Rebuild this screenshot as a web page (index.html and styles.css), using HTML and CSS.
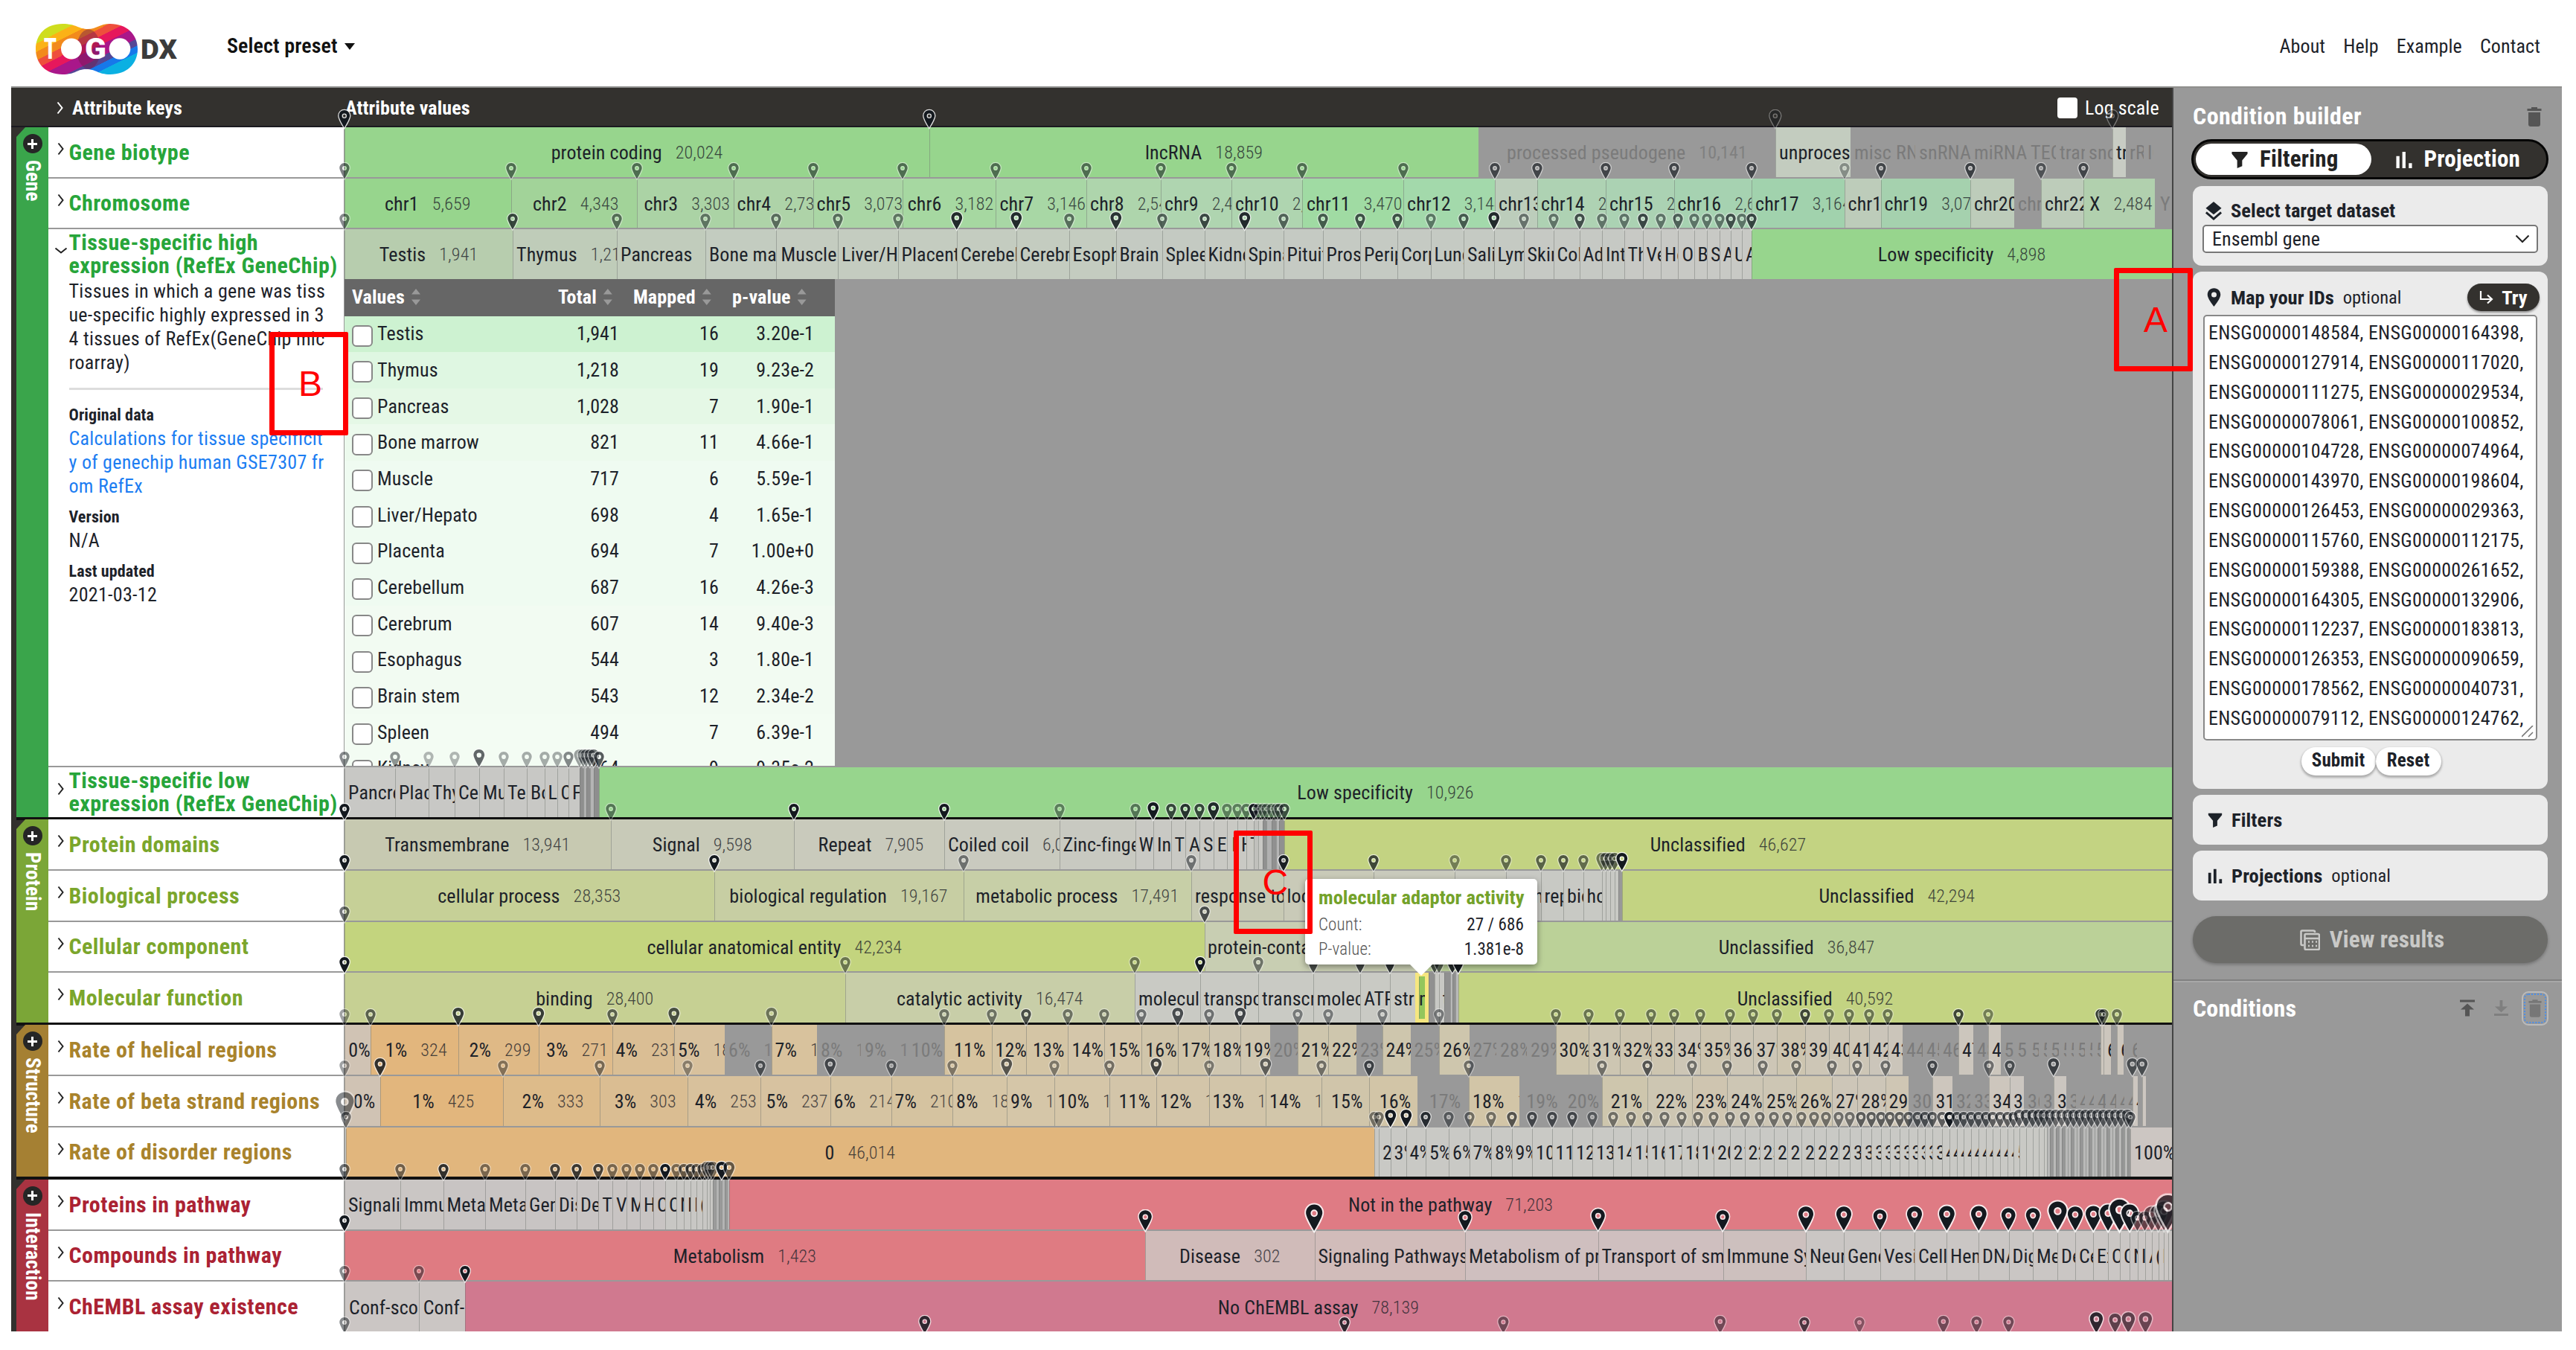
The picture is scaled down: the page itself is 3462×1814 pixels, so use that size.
FILE: index.html
```html
<!DOCTYPE html>
<html lang="en">
<head>
<meta charset="utf-8">
<title>TogoDX</title>
<link rel="stylesheet" href="styles.css">
</head>
<body>
<svg class="defs" width="0" height="0">
  <symbol id="pin" viewBox="0 0 16 23" overflow="visible"><path fill-rule="evenodd" d="M8 .9C4.300.9 1.300 3.700 1.300 7.700 1.300 11.500 8 22.200 8 22.200S14.700 11.500 14.700 7.700C14.700 3.700 11.700.9 8 .9ZM8 5A2.900 3 0 1 1 8 11 2.900 3 0 1 1 8 5Z"/></symbol>
  <symbol id="chev" viewBox="0 0 10 18"><path d="M1.500 1.500 7.500 9 1.500 16.500" fill="none" stroke="currentColor" stroke-width="2"/></symbol>
  <symbol id="funnel" viewBox="0 0 24 24"><path d="M1 1H23V4L15.500 13V21L8.500 24V13L1 4Z" fill="currentColor"/></symbol>
  <symbol id="bars" viewBox="0 0 24 24"><path d="M1 7H5.500V24H1ZM9.500 1H14V24H9.500ZM18.500 17H23V24H18.500Z" fill="currentColor"/></symbol>
  <symbol id="trash" viewBox="0 0 20 26"><path d="M6 0H14V2H19.500V5H.5V2H6ZM2 7H18V23Q18 26 15 26H5Q2 26 2 23Z" fill="currentColor"/></symbol>
</svg>

<header class="top">
  <svg class="logo" viewBox="0 0 190 68">
    <defs>
      <linearGradient id="bands" gradientUnits="userSpaceOnUse" x1="0" y1="0" x2="54" y2="107">
        <stop offset=".2" stop-color="#cfdd1e"/><stop offset=".2" stop-color="#fbb216"/>
        <stop offset=".285" stop-color="#fbb216"/><stop offset=".285" stop-color="#f28a1c"/>
        <stop offset=".37" stop-color="#f28a1c"/><stop offset=".37" stop-color="#ee4f3c"/>
        <stop offset=".45" stop-color="#ee4f3c"/><stop offset=".45" stop-color="#e6175c"/>
        <stop offset=".54" stop-color="#e6175c"/><stop offset=".54" stop-color="#a9178a"/>
        <stop offset=".66" stop-color="#a9178a"/><stop offset=".66" stop-color="#544796"/>
        <stop offset=".73" stop-color="#544796"/><stop offset=".73" stop-color="#1778ea"/>
        <stop offset=".8" stop-color="#1778ea"/><stop offset=".8" stop-color="#0bb0e2"/>
      </linearGradient>
    </defs>
    <path d="M36 0C54 0 58 7 70 7S86 0 100 0C122 0 137 14 137 34S122 68 100 68C84 68 81 61 68 61S54 68 36 68C14 68 0 54 0 34S14 0 36 0Z" fill="url(#bands)"/>
    <ellipse cx="71" cy="34" rx="16" ry="26.500" fill="#701a4a" opacity=".45"/>
    <circle cx="48" cy="33.500" r="14" fill="#fff"/>
    <circle cx="113" cy="33.500" r="14.300" fill="#fff"/>
    <text x="11" y="46.500" class="logo-t" textLength="17" lengthAdjust="spacingAndGlyphs">T</text>
    <text x="66" y="46.500" class="logo-t" textLength="29" lengthAdjust="spacingAndGlyphs">G</text>
    <text x="141" y="46.500" class="logo-dx" textLength="49" lengthAdjust="spacingAndGlyphs">DX</text>
  </svg>
  <div class="preset">Select preset<i></i></div>
  <nav><a>About</a><a>Help</a><a>Example</a><a>Contact</a></nav>
</header>

<main class="app">
  <section class="board">
    <div class="board-head">
      <svg class="hchev"><use href="#chev"/></svg><b class="hk">Attribute keys</b><b class="hv">Attribute values</b>
      <span class="log"><i></i>Log scale</span>
    </div>

    <div class="group gene">
      <div class="cat"><span class="plus"></span><span class="cat-name">Gene</span></div>
      <div class="rows">
        <div class="key"><svg><use href="#chev"/></svg><h3>Gene biotype</h3></div><div class="track" data-row="biotype"></div>
        <div class="key"><svg><use href="#chev"/></svg><h3>Chromosome</h3></div><div class="track" data-row="chromosome"></div>
        <div class="key open"><svg><use href="#chev"/></svg>
          <h3>Tissue-specific high<br>expression (RefEx GeneChip)</h3>
          <p>Tissues in which a gene was tiss<br>ue-specific highly expressed in 3<br>4 tissues of RefEx(GeneChip mic<br>roarray)</p>
          <hr>
          <h4>Original data</h4><p class="link">Calculations for tissue specificit<br>y of genechip human GSE7307 fr<br>om RefEx</p>
          <h4>Version</h4><p>N/A</p>
          <h4>Last updated</h4><p>2021-03-12</p>
        </div>
        <div class="detail">
          <div class="track" data-row="high"></div>
          <div class="table">
            <div class="tr th"><span>Values<i></i></span><span>Total<i></i></span><span>Mapped<i></i></span><span>p-value<i></i></span></div>
          </div>
        </div>
        <div class="key"><svg><use href="#chev"/></svg><h3>Tissue-specific low<br>expression (RefEx GeneChip)</h3></div><div class="track" data-row="low"></div>
      </div>
    </div>

    <div class="group protein">
      <div class="cat"><span class="plus"></span><span class="cat-name">Protein</span></div>
      <div class="rows">
        <div class="key"><svg><use href="#chev"/></svg><h3>Protein domains</h3></div><div class="track" data-row="domains"></div>
        <div class="key"><svg><use href="#chev"/></svg><h3>Biological process</h3></div><div class="track" data-row="process"></div>
        <div class="key"><svg><use href="#chev"/></svg><h3>Cellular component</h3></div><div class="track" data-row="component"></div>
        <div class="key"><svg><use href="#chev"/></svg><h3>Molecular function</h3></div><div class="track" data-row="function"></div>
      </div>
    </div>

    <div class="group structure">
      <div class="cat"><span class="plus"></span><span class="cat-name">Structure</span></div>
      <div class="rows">
        <div class="key"><svg><use href="#chev"/></svg><h3>Rate of helical regions</h3></div><div class="track" data-row="helical"></div>
        <div class="key"><svg><use href="#chev"/></svg><h3>Rate of beta strand regions</h3></div><div class="track" data-row="beta"></div>
        <div class="key"><svg><use href="#chev"/></svg><h3>Rate of disorder regions</h3></div><div class="track" data-row="disorder"></div>
      </div>
    </div>

    <div class="group interaction">
      <div class="cat"><span class="plus"></span><span class="cat-name">Interaction</span></div>
      <div class="rows">
        <div class="key"><svg><use href="#chev"/></svg><h3>Proteins in pathway</h3></div><div class="track" data-row="pathway"></div>
        <div class="key"><svg><use href="#chev"/></svg><h3>Compounds in pathway</h3></div><div class="track" data-row="compounds"></div>
        <div class="key"><svg><use href="#chev"/></svg><h3>ChEMBL assay existence</h3></div><div class="track" data-row="chembl"></div>
        <div class="key"></div><div class="track" data-row="next"></div>
      </div>
    </div>
  </section>

  <aside class="side">
    <div class="side-title">Condition builder<svg class="trash"><use href="#trash"/></svg></div>
    <div class="toggle">
      <span class="on"><svg><use href="#funnel"/></svg>Filtering</span>
      <span><svg><use href="#bars"/></svg>Projection</span>
    </div>
    <div class="card dataset">
      <div class="label"><svg viewBox="0 0 24 26"><path d="M12 0 23 9 12 18 1 9Z" fill="currentColor"/><path d="M1.500 15 12 24 22.500 15" fill="none" stroke="currentColor" stroke-width="3"/></svg>Select target dataset</div>
      <div class="select">Ensembl gene<svg viewBox="0 0 20 12"><path d="M1.500 1.500 10 10 18.500 1.500" fill="none" stroke="#222" stroke-width="2"/></svg></div>
    </div>
    <div class="card ids">
      <div class="label"><svg class="mark" viewBox="0 0 20 26"><path fill-rule="evenodd" d="M10 0C4.500 0 .8 4 .8 9.200.8 15 10 26 10 26S19.200 15 19.200 9.200C19.200 4 15.500 0 10 0ZM10 5.500A3.700 3.700 0 1 1 10 12.900 3.700 3.700 0 1 1 10 5.500Z" fill="currentColor"/></svg>Map your IDs<small>optional</small>
        <span class="try"><svg viewBox="0 0 20 18"><path d="M2 0V11H16M11 5.500 17 11 11 16.500" fill="none" stroke="#fff" stroke-width="2.200"/></svg>Try</span></div>
      <div class="area">ENSG00000148584, ENSG00000164398,<br>ENSG00000127914, ENSG00000117020,<br>ENSG00000111275, ENSG00000029534,<br>ENSG00000078061, ENSG00000100852,<br>ENSG00000104728, ENSG00000074964,<br>ENSG00000143970, ENSG00000198604,<br>ENSG00000126453, ENSG00000029363,<br>ENSG00000115760, ENSG00000112175,<br>ENSG00000159388, ENSG00000261652,<br>ENSG00000164305, ENSG00000132906,<br>ENSG00000112237, ENSG00000183813,<br>ENSG00000126353, ENSG00000090659,<br>ENSG00000178562, ENSG00000040731,<br>ENSG00000079112, ENSG00000124762,<svg viewBox="0 0 16 16"><path d="M0 15 15 0M9 15 15 9" stroke="#777" stroke-width="1.600"/></svg></div>
      <div class="btns"><span class="submit">Submit</span><span class="reset">Reset</span></div>
    </div>
    <div class="card single"><svg><use href="#funnel"/></svg>Filters</div>
    <div class="card single"><svg><use href="#bars"/></svg>Projections<small>optional</small></div>
    <div class="view"><svg viewBox="0 0 27 28"><path d="M5 21H3Q1.500 21 1.500 19V3Q1.500 1.500 3 1.500H18Q20 1.500 20 3V4M8 6H24Q26 6 26 8V25Q26 27 24 27H8Q6.500 27 6.500 25V8Q6.500 6 8 6ZM6.500 12H26M11 16.500H13M16 16.500H18M21 16.500H23M11 22H13M16 22H18M21 22H23" fill="none" stroke="currentColor" stroke-width="2.600"/></svg>View results</div>
    <div class="conds">Conditions
      <svg class="up" viewBox="0 0 20 22"><path d="M0 0H20V3H0ZM10 5 19 13H13V22H7V13H1Z" fill="currentColor"/></svg>
      <svg class="down" viewBox="0 0 20 22"><path d="M0 19H20V22H0ZM10 17 19 9H12V0H8V9H1Z" fill="currentColor"/></svg>
      <span class="focus"><svg><use href="#trash"/></svg></span>
    </div>
  </aside>
</main>

<div class="tip">
  <b>molecular adaptor activity</b>
  <div><span>Count:</span><em>27 / 686</em></div>
  <div><span>P-value:</span><em>1.381e-8</em></div>
</div>
<div class="mark-box a">A</div>
<div class="mark-box b">B</div>
<div class="mark-box c">C</div>
<script src="script.js"></script>
</body>
</html>
```
FILE: styles.css
```css
* { box-sizing: border-box; }
body { margin: 0; width: 3462px; height: 1814px; overflow: hidden; background: #fff; color: #1d2229; font: 400 26px/32px "Roboto Condensed", Roboto, sans-serif; font-stretch: 75%; letter-spacing: .12px; position: relative; }
h3, h4, p { margin: 0; }
.defs { position: absolute; }
svg { display: block; flex: none; }

.top { height: 116px; display: flex; align-items: flex-start; padding: 32px 48px 0; }
.logo { width: 190px; height: 68px; }
.logo-t { font: 900 39px Roboto, sans-serif; fill: #fff; }
.logo-dx { font: 900 36px Roboto, sans-serif; fill: #3b3b3b; }
.preset { margin: 14px 0 0 67px; font-size: 28px; font-weight: 600; display: flex; align-items: center; gap: 9px; color: #111; }
.preset i { border: 7px solid transparent; border-top: 9px solid #111; border-bottom: 0; }
nav { margin: 14px 0 0 auto; display: flex; gap: 24px; }

.app { display: flex; margin-left: 15px; width: 3428px; height: 1673px; border-top: 2px solid #8f8f8d; overflow: hidden; background: #999; }
.board { width: 2904px; background: #33312e; flex: none; }
.side { width: 524px; flex: none; position: relative; z-index: 5; background: #999; border-left: 2px solid #444; padding: 22px 19px 0 26px; }

.board-head { height: 53px; display: flex; align-items: center; color: #fff; padding: 3px 0 0 61px; border-bottom: 2px solid #1b1a20; }
.hchev { width: 10px; height: 18px; margin-right: 11px; }
.hk { width: 367px; }
.hv { flex: 1; }
.log { display: flex; align-items: center; width: 154px; }
.log i { width: 27px; height: 28px; border-radius: 4px; background: #fff; margin-right: 10px; }

.group { display: flex; padding-left: 7px; position: relative; }
.cat { width: 43px; display: flex; flex-direction: column; align-items: center; padding-top: 9px; background: var(--c); clip-path: polygon(12px 0, 100% 0, 100% 100%, 0 100%, 0 13px); color: #fff; }
.plus { width: 26px; height: 26px; border-radius: 50%; background: linear-gradient(#fff, #fff) center/13px 3px no-repeat, linear-gradient(#fff, #fff) center/3px 13px no-repeat #262626; }
.cat-name { writing-mode: vertical-rl; font-weight: 700; margin-top: 9px; font-size: 27px; line-height: 30px; }
.rows { display: grid; grid-template-columns: 397px 2457px; row-gap: 2px; background: #999; }
.gene { --c: #3aa54b; --t: #27a53a; margin-bottom: 3px; }
.protein { --c: #7ba637; --t: #7ba62c; margin-bottom: 3px; }
.structure { --c: #a58033; --t: #a9832c; margin-bottom: 3.5px; }
.interaction { --c: #a93341; --t: #ab2233; height: 204.25px; }
.group::after { content: ""; position: absolute; left: 7px; right: 0; top: 100%; height: 3.5px; background: #111; }
.gene .rows { grid-template-rows: 66.5px 66.5px 720.5px 67.5px; }
.protein .rows { grid-template-rows: repeat(4, 66.75px); }
.interaction .rows { grid-template-rows: repeat(4, 66.75px); }
.structure .rows { grid-template-rows: repeat(3, 66.75px); }

.key { background: #fff; padding-left: 27.5px; position: relative; display: flex; flex-direction: column; justify-content: center; }
.key > svg { position: absolute; left: 12px; top: 20px; width: 10px; height: 18px; color: #222; }
.key h3 { font-size: 30px; line-height: 31px; font-weight: 700; letter-spacing: .45px; color: var(--t); white-space: nowrap; }
.key.open { justify-content: flex-start; padding-top: 2px; }
.key.open > svg { transform: rotate(90deg); }
.key.open p { white-space: nowrap; letter-spacing: .3px; }
.key.open h3 { margin-bottom: 3px; }
.key hr { width: 341px; margin: 18px 0 18px; border: 0; height: 3px; background: #ddd; }
.key h4 { font-size: 22px; line-height: 32px; margin-bottom: -1px; }
.key p + h4 { margin-top: 10px; }
.key hr + h4 { margin-top: 0; }
.key .link { color: #1c7df2; }

.track { display: flex; position: relative; margin-left: 1px; }
.detail .track { height: 66.5px; }
.seg { height: 100%; flex: none; overflow: hidden; display: flex; justify-content: safe center; align-items: center; padding: 2px 0 0 5px; white-space: nowrap; box-shadow: inset 1px 0 rgba(110, 115, 110, .45); }
.seg span { margin-left: 18px; font-size: 24px; font-weight: 300; opacity: .8; }
.seg.wide, .seg.thin { padding-left: 0; }
.seg.none { color: #7b7b7b; box-shadow: none; }
.seg.none span { opacity: .8; font-weight: 400; }
.seg.sel { border: 5px solid #f6e67f; background: #93c65c; padding-left: 0; }
.pin { position: absolute; overflow: visible; fill: #14191f; stroke: rgba(255, 255, 255, .85); stroke-width: 2.4; paint-order: stroke; }

.table { width: 659px; margin-left: 1px; height: 654px; overflow: hidden; display: flex; flex-direction: column; }
.tr { height: 48.66px; flex: none; display: grid; grid-template-columns: 270px 99px 134px 128px; align-items: center; padding-bottom: 1px; }
.tr span { text-align: right; white-space: nowrap; }
.tr span:first-child { display: flex; align-items: center; padding-left: 10px; text-align: left; }
.box { width: 28px; height: 29px; border: 2px solid #888; border-radius: 6px; background: #fff; margin-right: 6px; position: relative; top: 3px; }
.th { height: 50px; background: #666; color: #fff; font-weight: 700; grid-template-columns: 287px 101px 133px 138px; }
.th span { display: flex; align-items: center; justify-content: flex-start; }
.th i { width: 12px; height: 22px; margin-left: 9px; background: #999; clip-path: polygon(50% 0, 100% 34%, 0 34%, 0 66%, 100% 66%, 50% 100%, 0 66%, 0 34%); }

.side-title { color: #fff; font-size: 32px; font-weight: 700; letter-spacing: .4px; line-height: 32px; display: flex; justify-content: space-between; margin-bottom: 15px; }
.trash { width: 20px; height: 26px; color: #555; margin: 4px 8px 0 0; }
.toggle { height: 54px; margin: 0 -1px 9px -2px; border: 3px solid #050505; border-radius: 27px; background: #33312e; display: flex; padding: 3px; font-size: 31px; font-weight: 700; letter-spacing: .2px; color: #fff; }
.toggle span { display: flex; align-items: center; justify-content: center; gap: 15px; flex: 1; }
.toggle svg { width: 24px; height: 23px; }
.toggle .on { background: #fff; color: #222; border-radius: 21px; padding-left: 3px; }
.card { background: #ebebeb; border-radius: 12px; }
.label { font-size: 26.5px; letter-spacing: 0; font-weight: 700; display: flex; align-items: center; }
.label svg { width: 24px; height: 25px; margin-right: 11px; }
.label svg.mark { width: 19px; margin: 0 13px 0 3px; }
small { font-size: 24.5px; font-weight: 400; margin-left: 12px; }
.dataset { height: 107px; padding: 17px 13px 0 16px; margin-bottom: 8px; }
.select { margin: 3px 0 0 -3px; height: 38px; border: 2px solid #777; border-radius: 5px; background: #fff; display: flex; align-items: center; justify-content: space-between; padding: 0 9px 0 11px; }
.select svg { width: 20px; height: 12px; }
.ids { height: 695px; padding: 16px 11px 0 16px; margin-bottom: 8px; }
.ids .label { height: 37px; margin-bottom: 5px; }
.try { margin-left: auto; width: 97px; height: 37px; border-radius: 19px; background: #33312e; color: #fff; display: flex; align-items: center; justify-content: center; box-shadow: 0 2px 3px #0006; }
.label .try svg { width: 20px; height: 18px; margin-right: 10px; }
.area { margin: 0 3px 0 -2px; height: 572px; border: 2px solid #888; border-radius: 5px; background: #fff; padding: 3px 5px; line-height: 39.85px; letter-spacing: .28px; position: relative; white-space: nowrap; }
.area svg { position: absolute; right: 3px; bottom: 2px; width: 16px; height: 16px; }
.btns { display: flex; justify-content: center; padding-top: 9px; margin-left: -3px; font-size: 25px; font-weight: 700; }
.btns span { height: 38px; border-radius: 19px; background: #fff; line-height: 36px; text-align: center; box-shadow: 0 2px 3px 1px #0004; }
.submit { width: 100px; }
.reset { width: 88px; }
.single { height: 67px; margin-bottom: 8px; display: flex; align-items: center; font-size: 26.5px; font-weight: 700; padding-left: 20px; }
.single svg { width: 20px; height: 22px; margin-right: 12px; }
.view { height: 63px; margin: 21px 0 22px; border-radius: 32px; background: #6c6c69; color: #c9c9c7; display: flex; align-items: center; justify-content: center; gap: 13px; padding-left: 5px; font-size: 31px; font-weight: 700; box-shadow: 0 2px 4px #0004; }
.view svg { width: 27px; height: 28px; }
.conds { margin: 0 -19px 0 -26px; padding: 14px 18px 0 26px; border-top: 2px solid #808080; box-shadow: inset 0 2px #a8a8a8; height: 80px; display: flex; align-items: flex-start; font-size: 32px; line-height: 46px; font-weight: 700; color: #fff; }
.conds .up { width: 20px; height: 23px; margin: 11px 26px 0 auto; color: #555; }
.conds .down { width: 19px; height: 23px; margin: 11px 18px 0 0; color: #7f7f7f; }
.focus { width: 36px; height: 46px; border: 2px solid #bbb; border-radius: 9px; display: grid; place-items: center; color: #777; outline: 2px dotted #4a8ee8; outline-offset: -5px; }
.focus svg { width: 18px; height: 24px; }

.tip { position: absolute; left: 1754px; top: 1181px; width: 312px; height: 115px; background: #fff; border-radius: 5px; padding: 9px 18px; box-shadow: 0 3px 8px #0006; z-index: 6; }
.tip::after { content: ""; position: absolute; left: 141px; top: 100%; border: 15px solid transparent; border-top-color: #fff; border-bottom: 0; }
.tip b { display: block; font-size: 26.5px; letter-spacing: 0; color: #74a22a; white-space: nowrap; }
.tip div { display: flex; justify-content: space-between; font-size: 23px; height: 33px; line-height: 41px; }
.tip span { color: #555; font-weight: 300; }
.tip em { font-style: normal; }
.mark-box { position: absolute; z-index: 7; border: 7px solid #f00; border-radius: 2px; color: #f00; font: 48px/1 "Liberation Sans", sans-serif; display: flex; justify-content: center; align-items: center; }
.a { left: 2841px; top: 360px; width: 106px; height: 139px; padding-left: 6px; }
.b { left: 362px; top: 446px; width: 106px; height: 139px; padding-left: 4px; }
.c { left: 1658px; top: 1116px; width: 106px; height: 139px; padding-left: 6px; }
```
FILE: script.js
```js
// Each line: start | label | count | colour | pin opacity | pin scale.
// "x" marks a value with no mapped entries; blank fields repeat the previous one.
const END = 2919, START = 463;
const DATA = {
biotype: `463|protein coding|20,024|#97d58d|1|1.1
1249|lncRNA|18,859||1|1.1
1987|processed pseudogene|10,141|x
2386|unprocessed|2,6|#c3ccbf|.4|1.1
2487|misc RNA||x
2574|snRNA||x
2648|miRNA||x
2724|TEC||x
2763|transcribed||x
2802|snoRNA||x
2839|transl||#c8ccc4|.4|1.1
2857|rRNA||x
2881|IG||x
2894|||x`,
chromosome: `463|chr1|5,659|#97d58d|.55|1
686.5|chr2|4,343|#a2d399
856|chr3|3,303|#abd3a5
985.5|chr4|2,732|#aed3a8
1092.5|chr5|3,073|#aad6a5
1212.5|chr6|3,182|#a6d8a1
1337.5|chr7|3,146|#a8d7a5
1460|chr8|2,548|#aed5ac
1560|chr9|2,416|#afd5b0
1655|chr10|2,332|#afd5b0
1749.5|chr11|3,470|#a0dba3
1886|chr12|3,144|#a3d9ab
2009|chr13|1,5|#bccdbb|.65
2066|chr14|2,4|#aed2b3
2158|chr15|2,4|#abd2b3
2249.5|chr16|2,670|#a6d2b1
2354|chr17|3,164|#a1d2ad
2478.5|chr18||#bdccba|.35
2527.5|chr19|3,076|#a5d1ae|.65
2648|chr20||#bdccba|.7
2707|chr21||x
2743|chr22||#bdccba|.55
2799.5|X|2,484|#b1d0ae|.65
2896|Y||x`,
high: `463|Testis|1,941|#b7cdae|.5|1
689|Thymus|1,218|#bfccb9|.75
829|Pancreas|1,028|#c1ccbc|.55
948|Bone marrow||#c3ccc0|.5
1043|Muscle||#c4ccc0|.55
1126|Liver/Hepato|||.55
1206.5|Placenta|||.5
1286|Cerebellum|||.9|1.1
1365.5|Cerebrum|||.9|1.1
1436.5|Esophagus|||.55|1
1499.5|Brain stem||#c4cac2|.85|1.1
1561.5|Spleen|||.6|1
1618.5|Kidney|||.75
1672.5|Spinal|||.9|1.1
1724.5|Pituitary||#c5cac3|.6|1
1777.5|Prostate|||.65
1828|Peripheral|||.7
1878|Corpus|||.7
1922.5|Lung|||.5
1967|Salivary|||.65
2007.5|Lymph|||.9|1.1
2047.5|Skin||#c6c9c4|.5|1
2087.5|Colon|||.5
2122.5|Adrenal|||.7
2153|Int|||.5
2182.5|Thy||#c8c9c5|.5
2207.5|Vein|||.75
2232|Heart|||.5
2255|O|||.6
2276.5|B|||.5
2294|S|||.5
2310.5|A|||.5
2326|U|||.7
2341|A|||.5
2354|Low specificity|4,898|#97d58d|.75`,
low: `463|Pancreas||#c8c8c5|.5|1
531|Placenta|||.45
576|Thymus|||.3
611|Cereb|||.3
644|Muscle|||.65|1.1
677|Testis|||.35|1
708|Bone|||.35
731.5|Lu|||.35
748.5|C|||.35
764|F|||.5
779|||#8e8e8e|.4|1.1
784|||#b0b0b0|.5
788|||#8e8e8e|.5
793|||#b4b4b4|.6
798|||#8e8e8e|.6
805|Low specificity|10,926|#97d58d|.7|1`,
domains: `463|Transmembrane|13,941|#c7c9b1|1|1
820.5|Signal|9,598|#c8cab8|.5
1067|Repeat|7,905|#c9cabc|1
1269|Coiled coil|6,052|#c9cabf|1
1423.5|Zinc-finger||#c8c9c1|.45
1525.5|WD||#c9c9c4|.5
1550|In|||1|1.1
1573.5|Ti|||.75|1
1593|A|||.85
1612|S|||.75
1630.5|E|||.9|1.1
1649|I|||.45|1
1663|H|||.45
1675|T|||.5
1684.5|||#c0c0bc|1
1690.5|||#c8c8c4|.5
1697|||#909090|.5
1702|||#b0b0b0|.5
1709|||#909090|.5
1715|||#b4b4b4|.5
1719|||#909090|.6
1726|Unclassified|46,627|#c3d382|.7`,
process: `463|cellular process|28,353|#c6d097|1|1
959.5|biological regulation|19,167|#c7cea3|1
1294.5|metabolic process|17,491|#c7cfa7|.5
1601|response to stimulus||#c8cab4|.5
1724.5|localization||#c9cab8|.95
1846|developmental||#c9cabc|.75
1954.5|multicellular||#c9cac0|.45
2024|immun||#c8c9c4|.55
2070.5|repro|||.6
2101|bio|||.65
2127.5|ho|||.55
2153|l|||.5|1.1
2158||||.6
2164||||.6
2170||||.6
2175|||#999|0
2179.5|Unclassified|42,294|#c3d382|1|1.1`,
component: `463|cellular anatomical entity|42,234|#c3d47e|.6|1
1618.5|protein-containing complex||#c8ceb2|.7
1910|Unclassified|36,847|#bbd198|0`,
function: `463|binding|28,400|#c6d093|1|1
1135.5|catalytic activity|16,474|#c8cea8|.5
1525|molecular tr||#c9cac4|.5
1613|transporter|||1
1691|transcription|||.5
1764.5|molecule|||.7
1828|ATP-d|||.75
1868|struct|||.85
1902|m||sel|0
1920|||#909090|0
1928|(||#c8c8c4|.7
1934|t||#c8c8c4|.6
1941|||#909090|0
1949|||#b8b8b8|0
1952|||#909090|.9
1956|||#b8b8b8|0
1960|Unclassified|40,592|#c3d382|1|1.1`,
helical: `463|0%||#d0c3b4|.4|1
498|1%|324|#e2b67d|.6
615.5|2%|299|#dfb986|.8|1.1
723.5|3%|271|#dfbb8b|.8
822.5|4%|231|#dabe94|.6|1
906|5%|186|#d8c19d|.7|1.1
974|6%|1|x
1036.5|7%|178|#d8c29d|.5
1098|8%|1|x
1157|9%|1|x
1218|10%||x
1269|11%||#d6c39f|.5|1
1332.5|12%||#d4c5a5|.5
1379|13%|||.7
1434.5|14%||#d4c6aa|.5
1484|15%|||.5
1533.5|16%||#d0c5aa|.5
1582.5|17%|||.7|1.1
1625|18%||#cfc6b0|.5|1
1667|19%|||.75|1.1
1706.5|20%||x
1743.5|21%||#cec6ad|.45|1
1785|22%|||.45
1823|23%||x
1857.5|24%||#cec6ad|.45
1895.5|25%||x
1934|26%||#cec6ad|.45
1974.5|27%||x
2011|28%||x
2052|29%||x
2090.5|30%||#cdc5ad|.5
2135|31%||#cdc6b2|.5
2176.5|32%||#cdc5b0
2218.5|33%
2249.5|34%||#cdc6b6
2285|35%||#cdc5b0
2324.5|36%||#cdc6b6
2355.5|37%
2388|38%||#cdc5b0
2426|39%||#cdc6b6|.75
2458|40%|||.5
2484.5|41%
2512|42%||#cbc5ba
2536.5|43%
2557|44%||x
2584|45%||x
2606|46%||x
2632|47%||#ccc6bd|.75
2652|48%||x
2672|49%||#ccc6bd|.45
2688.5|50%||x
2706|51%||x
2725|52%||x
2740|53||x
2751|54%||x
2767|5||x
2777|5||x
2787|56||x
2802|5||x
2812|5||x
2823|||#ccc6bd|.8
2827|6||#ccc6bd|.6
2837|||x
2845|6||#ccc6bd|.5
2854|||x
2860|6||x
2872|||x`,
beta: `463|0%||#d0c3b4|.4|1
511|1%|425|#e2b67d|.85|1.1
675.5|2%|333|#ddbb8a|.45|1
805.5|3%|303|#dabd92|.5
924|4%|253|#d8c19c|.4
1021.5|5%|237|#d7c2a0|.6
1115.5|6%|214|#d6c4a2|.65|1.1
1197.5|7%|210|#d5c3a0|.55|1
1280|8%|18|#d6c6a6|.45
1353|9%|1|#d5c6a8|.65|1.1
1416.5|10%|1|#d5c6a8|.45|1
1490.5|11%||#d3c5a9|.5
1554|12%|1|#d3c5a9|.75|1.1
1624.5|13%|1|#d2c5a9|.45|1
1701|14%|1|#d2c6aa|.6|1.1
1775.5|15%||#d0c5aa|.5|1
1840|16%||#d2c5a7|.7
1905|17%||x
1974|18%|1|#d2c5a7|.5
2042|19%||x
2098|20%||x
2153|21%||#cec6ad|.5
2214|22%||#cdc6b2|.65
2273.5|23%||#cfc5b0|.5
2321|24%||#cdc6b4
2369|25%
2414|26%||#cfc6b0
2462|27%||#cdc6b8
2496|28%
2533.5|29%||#cfc6b4
2565|30||x
2596.5|31%||#cdc6bd|.65
2624|32||x
2648|33||x
2673|34||#cdc6bd|.5
2701|35||#cbc6c0|.6
2720|36||x
2741|37||x
2760|38||#cbc6c0|.7|1.1
2776.5|39||x
2790|4||x
2802|4||x
2814|4||x
2830|4||x
2844|4||x
2855|4||x
2866|4||#ccc6c0|.6
2873|||x
2879|||#ccc6c0|.6
2884|||x`,
pathway: `463|Signaling||#cac6c4|.6|1
538|Immune|||.55
595.5|Metabol||#c8c4c3|.85
652|Metab|||.5
706|Gene|||.5
746|Dis|||.75
775|De|||.8
804|T|||.75
823|V|||.5
842|M|||.5
860|H|||.5
878|C|||.5
894|C||#c8c7c4|1
909|N|||.5
919|I|||.6
928|I|||.7
936|(|||.6
944||||.6
950||||.6|1.1
954||||.6
958|||#9b9b9b|.5
962|||#b4b4b4|0
966|||#999|0
970|||#b4b4b4|1
974|||#999|0
977|||#b4b4b4|0
980|Not in the pathway|71,203|#df7b84|.6`,
compounds: `463|Metabolism|1,423|#df7b82|1|1
1539|Disease|302|#d0bbb9|1|1.28
1766.5|Signaling Pathways||#d1bcba|1|1.65
1969|Metabolism of proteins||#cfbfbf|1|1.25
2147.5|Transport of small|||1|1.35
2315.5|Immune System||#cdc0be|1|1.28
2427|Neuronal||#cac6c4|1|1.5
2478|Gene|||1|1.5
2527|Vesicle|||1|1.32
2573|Cell c|||1|1.5
2616|Hemo|||1|1.55
2659|DNA|||1|1.55
2699.5|Dige|||1|1.4
2732|Meta|||1|1.4
2765|Dev|||1|1.8
2789|Cell|||1|1.5
2813|Ex|||1|1.55
2833|C|||1|1.65
2849|C|||1|1.95
2862|N|||1|1.65
2873|I|||.6|1.2
2883|A|||.6|1.2
2892|(|||.6|1.5
2901|I|||.6|1.6
2908||||.6|1.8
2914||||.75|2.2`,
chembl: `463|Conf-sco||#cbc6c4|.5|1
563|Conf-|||.5
625|No ChEMBL assay|78,139|#d0798f|1`,
next: `463|||#999|.5|1
1243||||.85|1.1
1807||||.85|1
2020.5||||.5|1.05
2312||||.5|1.1
2424.5||||.7|1
2499||||.4|1
2612||||.5|1.1
2656||||.5|1.05
2699||||.5|1.05
2817||||.85|1.3
2843||||.6|1.2
2860||||.6|1.3
2883||||.55|1.3`
};

// Percent bins of the disorder row.
const bins = [1853,1868.5,1889.5,1916,1947,1974.5,2004,2031.5,2059,2085.5,2113,2140,2167.5,2192,2213.5,2236.5,2260,2281.5,2303,2324.5,2344.5,2364.5,2384,2401.5,2421,2438,2453.5,2470.5,2486,2501,2515,2528,2539.5,2553,2564.5,2576.5,2587,2597,2610,2620,2630,2639,2648.5,2659,2668.5,2678,2688,2698,2706,2714,2722.5,2732,2739.5,2747];
let dis = ["463|||#c8c8c5|0|1", "465|0|46,014|#e1b67d|.5|1", "1846.5|||#c8c8c5|.5"];
bins.forEach((x, i) => {
  const n = i + 2;
  dis.push([x, n < 51 ? n + "%" : "", "", "#c9c9c5", i === 1 || i === 2 ? 1 : n === 5 ? .85 : n === 41 ? 1 : n > 8 && n < 13 ? .65 : n > 30 ? .6 : .5, i === 1 || i === 2 || n > 50 ? 1.1 : 1].join("|"));
});
for (let x = 2751, i = 0; x < 2861; x += 4, i++) {
  const dark = (x < 2775 || x > 2842) ? i % 2 : i % 3 === 2;
  dis.push([x, "", "", dark ? "#969696" : "#b9b9b8", i % 2 ? .55 : 0, 1.1].join("|"));
}
dis.push("2863|100%||#ccc6c2|.6|1");
DATA.disorder = dis.join("\n");

const NS = "http://www.w3.org/2000/svg";
function pin(track, x, o, s, lift) {
  const svg = document.createElementNS(NS, "svg"), use = document.createElementNS(NS, "use");
  use.setAttribute("href", "#pin");
  svg.append(use);
  svg.setAttribute("class", "pin");
  const w = 16 * s, h = 23 * s;
  svg.style.cssText = `left:${x - START - w / 2}px;top:${1 - h - (lift || 0)}px;width:${w}px;height:${h}px;opacity:${o}`;
  track.append(svg);
}

document.querySelectorAll(".track").forEach(track => {
  const segs = DATA[track.dataset.row].split("\n").map(l => l.split("|"));
  let color = "", o = .5, s = 1;
  const pins = [];
  segs.forEach((d, i) => {
    const x = +d[0], w = (i + 1 < segs.length ? +segs[i + 1][0] : END) - x;
    const el = document.createElement("div");
    el.className = "seg";
    if (d[3] === "x") el.classList.add("none");
    else if (d[3] === "sel") el.classList.add("sel");
    else { color = d[3] || color; el.style.background = color; }
    if (w > 220) el.classList.add("wide");
    if (!d[1]) el.classList.add("thin");
    el.style.width = w + "px";
    el.textContent = d[1] || "";
    if (d[2]) { const c = document.createElement("span"); c.textContent = d[2]; el.append(c); }
    track.append(el);
    if (d[3] !== "x") {
      if (d[4]) o = +d[4];
      if (d[5]) s = +d[5];
      if (o) pins.push([x, o, s]);
    }
  });
  if (track.dataset.row === "disorder") pin(track, 463.5, .5, 1.8, 8);
  pins.forEach(p => pin(track, ...p));
});

const tissues = [["Testis","1,941","16","3.20e-1","#cdf2d1"],["Thymus","1,218","19","9.23e-2","#dff7e2"],["Pancreas","1,028","7","1.90e-1","#e5f8e6"],["Bone marrow","821","11","4.66e-1","#ecfaed"],["Muscle","717","6","5.59e-1","#effbf1"],["Liver/Hepato","698","4","1.65e-1","#effbf1"],["Placenta","694","7","1.00e+0","#effbf1"],["Cerebellum","687","16","4.26e-3","#effbf1"],["Cerebrum","607","14","9.40e-3","#f2fbf2"],["Esophagus","544","3","1.80e-1","#f2fbf2"],["Brain stem","543","12","2.34e-2","#f2fbf2"],["Spleen","494","7","6.39e-1","#f3fcf3"],["Kidney","464","9","9.35e-2","#f3fcf3"]];
const table = document.querySelector(".table");
tissues.forEach(([n, t, m, p, c]) => {
  const r = document.createElement("div");
  r.className = "tr";
  r.style.background = c;
  r.innerHTML = `<span><i class="box"></i>${n}</span><span>${t}</span><span>${m}</span><span>${p}</span>`;
  table.append(r);
});
```
